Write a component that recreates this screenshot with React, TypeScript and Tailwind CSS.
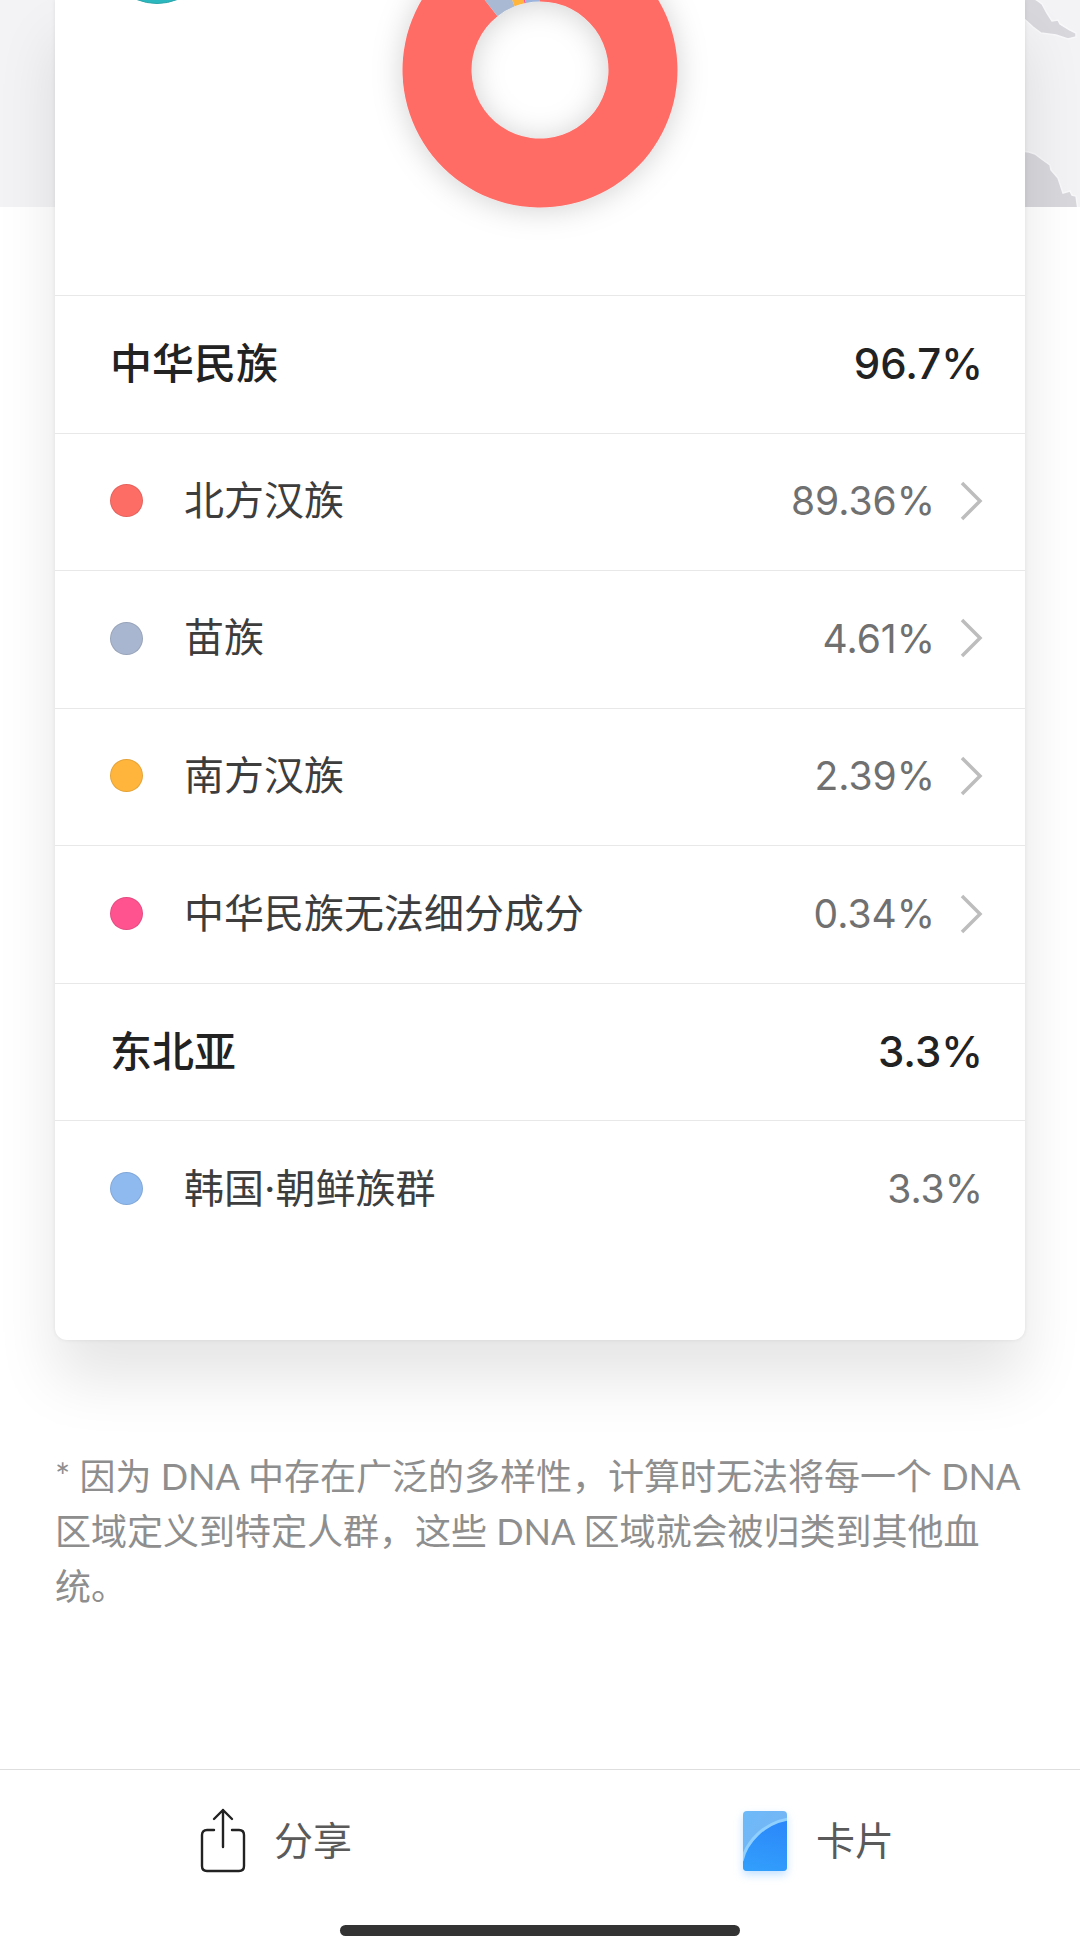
type Group = { name: string; percent: string };
type Region = { name: string; percent: string; dot: string; link?: boolean };

const CHINA: Group = { name: '中华民族', percent: '96.7%' };
const CHINA_REGIONS: Region[] = [
  { name: '北方汉族', percent: '89.36%', dot: 'bg-[#fe6c66]', link: true },
  { name: '苗族', percent: '4.61%', dot: 'bg-[#a9b6cf]', link: true },
  { name: '南方汉族', percent: '2.39%', dot: 'bg-[#ffb53b]', link: true },
  { name: '中华民族无法细分成分', percent: '0.34%', dot: 'bg-[#ff538f]', link: true },
];

const NORTHEAST: Group = { name: '东北亚', percent: '3.3%' };
const NORTHEAST_REGIONS: Region[] = [
  { name: '韩国·朝鲜族群', percent: '3.3%', dot: 'bg-[#8fbaf0]' },
];

const SLICES = [
  { value: 89.36, color: '#ff6c66' },
  { value: 4.61, color: '#a9b8d3' },
  { value: 2.39, color: '#ffb53b' },
  { value: 0.34, color: '#ff538f' },
  { value: 3.3, color: '#9db4dc' },
];

function slicePath(start: number, end: number) {
  const point = (r: number, share: number) => {
    const a = (share / 100) * Math.PI * 2;
    return `${(r * Math.sin(a)).toFixed(2)} ${(-r * Math.cos(a)).toFixed(2)}`;
  };
  const large = end - start > 50 ? 1 : 0;
  return `M${point(137.5, start)} A137.5 137.5 0 ${large} 1 ${point(137.5, end)} L${point(68.5, end)} A68.5 68.5 0 ${large} 0 ${point(68.5, start)} Z`;
}

function Donut() {
  let total = 0;
  return (
    <svg viewBox="-138 -70 276 208" className="w-[276px] h-[208px] overflow-visible" aria-hidden="true">
      <defs>
        <filter id="donut-shadow" x="-30%" y="-30%" width="160%" height="160%">
          <feDropShadow dx="0" dy="2" stdDeviation="15" floodColor="#000" floodOpacity="0.18" />
        </filter>
      </defs>
      <g filter="url(#donut-shadow)">
        {SLICES.map(({ value, color }) => {
          const start = total;
          total += value;
          return <path key={color} d={slicePath(start, total)} fill={color} />;
        })}
      </g>
    </svg>
  );
}

function MapStrip() {
  return (
    <div className="absolute inset-x-0 top-0 h-[207px] bg-[#f3f3f5] flex justify-end overflow-hidden">
      <svg viewBox="0 0 55 207" className="w-[55px] h-[207px]" fill="#d7d7dc" stroke="#f8f8fa" strokeWidth="1.5" aria-hidden="true">
        <path d="M-3 -3 L7 -3 L13 1 L17 4 L22 13 L27 21 L33 20 L35 24 L45 30 L51 33 L51 37 L43 39 L31 35 L16 33 L8 27 L-3 17 Z" />
        <path d="M-3 151 L4 152 L10 154 L18 160 L25 165 L26 170 L33 178 L36 187 L38 193 L45 191 L47 195 L51 196 L53 210 L-3 210 Z" />
      </svg>
    </div>
  );
}

function GroupRow({ name, percent }: Group) {
  return (
    <li className="flex items-center justify-between border-t border-[#e8e8e8] pl-[55px] pr-[42px] text-[42px] leading-none font-medium text-[#222]">
      <h2>{name}</h2>
      <span>{percent}</span>
    </li>
  );
}

function RegionRow({ name, percent, dot, link }: Region) {
  const content = (
    <>
      <span className={`w-[33px] h-[33px] rounded-full border border-black/10 ${dot}`} />
      <span className="ml-[41px] text-[40px] leading-none text-[#3d3d3d]">{name}</span>
      <span className="ml-auto text-[39px] leading-none text-[#707070]">{percent}</span>
      {link && (
        <svg viewBox="0 0 24 40" className="ml-6 w-6 h-10" fill="none" stroke="#bdbdbd" strokeWidth="3.5" aria-hidden="true">
          <path d="M3 2 L21 20 L3 38" />
        </svg>
      )}
    </>
  );

  return (
    <li className="flex border-t border-[#e8e8e8]">
      {link ? (
        <button type="button" className="flex flex-1 items-center pl-[55px] pr-[42px] pb-0.5">{content}</button>
      ) : (
        <div className="flex flex-1 items-center pl-[55px] pr-[42px] pb-0.5">{content}</div>
      )}
    </li>
  );
}

function ShareIcon() {
  return (
    <svg viewBox="0 0 46 66" className="w-[46px] h-[66px]" fill="none" stroke="#222" strokeWidth="2.4" strokeLinecap="round" strokeLinejoin="round" aria-hidden="true">
      <path d="M14 22 H7 Q2 22 2 27 V58 Q2 63 7 63 H39 Q44 63 44 58 V27 Q44 22 39 22 H32" />
      <path d="M23 39 V2 M14 11 L23 2 L32 11" />
    </svg>
  );
}

function CardIcon() {
  return (
    <svg viewBox="0 0 46 62" className="w-[46px] h-[62px] overflow-visible drop-shadow-[0_4px_4px_rgba(60,160,255,0.3)]" aria-hidden="true">
      <defs>
        <linearGradient id="card-back" x1="0" y1="0" x2="1" y2="1">
          <stop offset="0" stopColor="#6db9f8" />
          <stop offset="1" stopColor="#79b4f4" />
        </linearGradient>
        <linearGradient id="card-front" x1="0.6" y1="0" x2="0.4" y2="1">
          <stop offset="0" stopColor="#2b88fa" />
          <stop offset="1" stopColor="#329efc" />
        </linearGradient>
        <clipPath id="card-clip">
          <rect x="1" y="1" width="44" height="60" rx="4" />
        </clipPath>
      </defs>
      <g clipPath="url(#card-clip)">
        <rect x="1" y="1" width="44" height="60" fill="url(#card-back)" />
        <path d="M0 51 C4 32 22 13 46 9 V62 H0 Z" fill="url(#card-front)" />
        <path d="M0 51 C4 32 22 13 46 9" fill="none" stroke="#8fd0ff" strokeWidth="3" />
      </g>
    </svg>
  );
}

export default function App() {
  return (
    <div className="relative min-h-screen flex flex-col overflow-hidden bg-white font-['Inter','Noto_Sans_CJK_SC',sans-serif]">
      <MapStrip />

      <main className="relative px-[55px]">
        <section className="relative rounded-b-xl bg-white pb-[82px] shadow-[0_40px_60px_rgba(0,0,0,0.1),0_0_4px_rgba(0,0,0,0.08)]">
          <button type="button" aria-label="返回" className="absolute -top-[104px] left-12 w-[108px] h-[108px] rounded-full bg-[#2bb9bf] border border-[#2aa5aa]" />
          <div className="flex justify-center pb-[87px]">
            <Donut />
          </div>
          <ul className="grid auto-rows-fr min-h-[963px]">
            <GroupRow {...CHINA} />
            {CHINA_REGIONS.map((region) => (
              <RegionRow key={region.name} {...region} />
            ))}
            <GroupRow {...NORTHEAST} />
            {NORTHEAST_REGIONS.map((region) => (
              <RegionRow key={region.name} {...region} />
            ))}
          </ul>
        </section>

        <p className="pt-[109px] pb-10 font-['Lato','Noto_Sans_CJK_SC',sans-serif] text-[36px] leading-[55px] text-[#8e8e8e]">
          * 因为 DNA 中存在广泛的多样性，计算时无法将每一个 DNA 区域定义到特定人群，这些 DNA 区域就会被归类到其他血统。
        </p>
      </main>

      <footer className="relative mt-auto border-t border-[#dedede] bg-white">
        <div className="grid grid-cols-2 h-[155px] pb-3.5 text-[39px] leading-none text-[#5a5a5a]">
          <button type="button" className="flex items-center justify-center gap-7 pl-3">
            <ShareIcon />
            分享
          </button>
          <button type="button" className="flex items-center justify-center gap-7 pl-4">
            <CardIcon />
            卡片
          </button>
        </div>
        <div className="mx-auto mb-px w-[400px] h-[11px] rounded-full bg-[#333]" />
      </footer>
    </div>
  );
}
